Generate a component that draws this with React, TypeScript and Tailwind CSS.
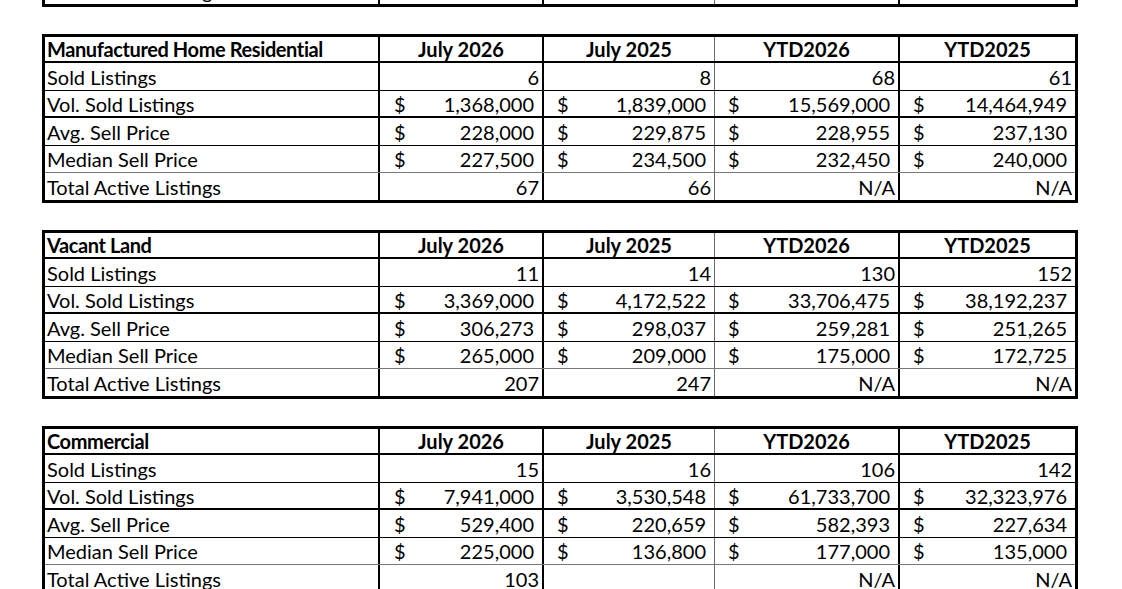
import React from 'react';

type Cell = { kind: 'count'; v: string } | { kind: 'money'; v: string } | { kind: 'blank' };

interface TableData {
  title: string;
  rows: { label: string; cells: Cell[] }[];
}

const c = (v: string): Cell => ({ kind: 'count', v });
const m = (v: string): Cell => ({ kind: 'money', v });
const blank: Cell = { kind: 'blank' };

const headers = ['July 2026', 'July 2025', 'YTD2026', 'YTD2025'];

const tables: TableData[] = [
  {
    title: 'Manufactured Home Residential',
    rows: [
      { label: 'Sold Listings', cells: [c('6'), c('8'), c('68'), c('61')] },
      { label: 'Vol. Sold Listings', cells: [m('1,368,000'), m('1,839,000'), m('15,569,000'), m('14,464,949')] },
      { label: 'Avg. Sell Price', cells: [m('228,000'), m('229,875'), m('228,955'), m('237,130')] },
      { label: 'Median Sell Price', cells: [m('227,500'), m('234,500'), m('232,450'), m('240,000')] },
      { label: 'Total Active Listings', cells: [c('67'), c('66'), c('N/A'), c('N/A')] },
    ],
  },
  {
    title: 'Vacant Land',
    rows: [
      { label: 'Sold Listings', cells: [c('11'), c('14'), c('130'), c('152')] },
      { label: 'Vol. Sold Listings', cells: [m('3,369,000'), m('4,172,522'), m('33,706,475'), m('38,192,237')] },
      { label: 'Avg. Sell Price', cells: [m('306,273'), m('298,037'), m('259,281'), m('251,265')] },
      { label: 'Median Sell Price', cells: [m('265,000'), m('209,000'), m('175,000'), m('172,725')] },
      { label: 'Total Active Listings', cells: [c('207'), c('247'), c('N/A'), c('N/A')] },
    ],
  },
  {
    title: 'Commercial',
    rows: [
      { label: 'Sold Listings', cells: [c('15'), c('16'), c('106'), c('142')] },
      { label: 'Vol. Sold Listings', cells: [m('7,941,000'), m('3,530,548'), m('61,733,700'), m('32,323,976')] },
      { label: 'Avg. Sell Price', cells: [m('529,400'), m('220,659'), m('582,393'), m('227,634')] },
      { label: 'Median Sell Price', cells: [m('225,000'), m('136,800'), m('177,000'), m('135,000')] },
      { label: 'Total Active Listings', cells: [c('103'), blank, c('N/A'), c('N/A')] },
    ],
  },
];

// column widths incl. right border, sum 1030 (+6 outer border)
const colClass = [
  'w-[335px] border-r-2 border-black',
  'w-[164px] border-r-2 border-black',
  'w-[171px] border-r border-[#6b6b6b]',
  'w-[185px] border-r-2 border-black',
  'w-[175px]',
];

const rowHeights = ['h-[28px]', 'h-[27px]', 'h-[28px]', 'h-[27px]', 'h-[27px]'];
const rowBorders = [
  'border-b border-black',
  'border-b-2 border-black',
  'border-b border-black',
  'border-b border-[#777]',
  '',
];

function ValueCell({ cell, col }: { cell: Cell; col: number }) {
  const pl = col === 0 ? 'pl-[14px]' : 'pl-[13px]';
  if (cell.kind === 'money') {
    return (
      <div className={`${colClass[col + 1]} flex items-center justify-between ${pl} pr-[8px]`}>
        <span>$</span>
        <span>{cell.v}</span>
      </div>
    );
  }
  return (
    <div className={`${colClass[col + 1]} flex items-center justify-end pr-[3px]`}>
      {cell.kind === 'count' ? cell.v : ''}
    </div>
  );
}

function StatsTable({ data }: { data: TableData }) {
  return (
    <div className="w-[1036px] border-[3px] border-black">
      <div className="flex h-[26px] border-b-2 border-black font-bold">
        <div className={`${colClass[0]} flex items-center pl-[2px] tracking-[-0.4px]`}>{data.title}</div>
        {headers.map((h, i) => (
          <div key={h} className={`${colClass[i + 1]} flex items-center justify-center`}>
            {h}
          </div>
        ))}
      </div>
      {data.rows.map((row, r) => (
        <div key={row.label} className={`flex ${rowHeights[r]} ${rowBorders[r]}`}>
          <div className={`${colClass[0]} flex items-center pl-[2px]`}>{row.label}</div>
          {row.cells.map((cell, i) => (
            <ValueCell key={i} cell={cell} col={i} />
          ))}
        </div>
      ))}
    </div>
  );
}

// last row of the table above, mostly scrolled out of view
function CutOffRow() {
  return (
    <div className="h-[7px] overflow-hidden flex flex-col justify-end">
      <div className="w-[1036px] border-x-[3px] border-b-[3px] border-black">
        <div className="flex h-[27px]">
          <div className={`${colClass[0]} flex items-center pl-[2px]`}>Total Active Listings</div>
          <div className={`${colClass[1]}`} />
          <div className={`${colClass[2]}`} />
          <div className={`${colClass[3]} flex items-center justify-end pr-[3px]`}>N/A</div>
          <div className={`${colClass[4]} flex items-center justify-end pr-[3px]`}>N/A</div>
        </div>
      </div>
    </div>
  );
}

export default function App() {
  return (
    <div className="min-h-screen bg-white text-black font-[Lato,sans-serif] text-[20px] leading-none pl-[42px]">
      <CutOffRow />
      <div className="flex flex-col gap-[27px] pt-[27px]">
        {tables.map((t) => (
          <StatsTable key={t.title} data={t} />
        ))}
      </div>
    </div>
  );
}
